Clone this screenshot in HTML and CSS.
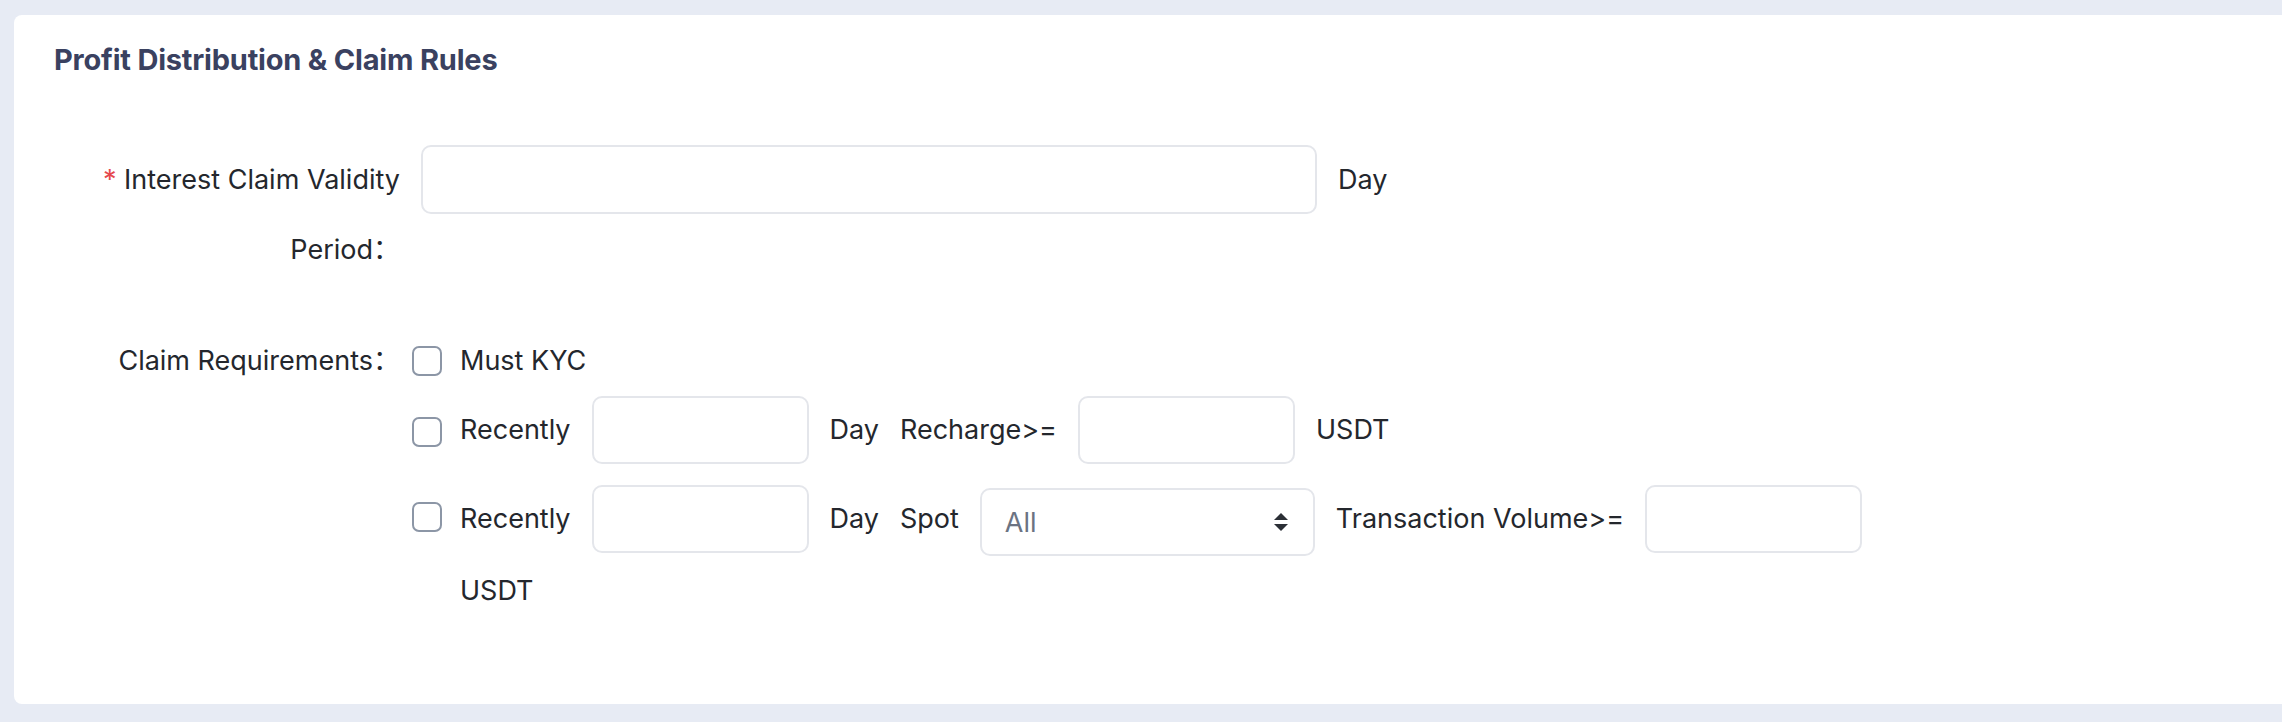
FILE: index.html
```html
<!DOCTYPE html>
<html lang="en">
<head>
<meta charset="utf-8">
<title>Profit Distribution &amp; Claim Rules</title>
<link rel="stylesheet" href="styles.css">
</head>
<body>
<div class="page">
  <section class="card">
    <h2 class="card-title">Profit Distribution &amp; Claim Rules</h2>
    <form class="form">
      <div class="form-item item-validity">
        <label class="form-label"><span class="req">*</span> Interest Claim Validity Period：</label>
        <div class="form-content">
          <input class="input input-lg" type="text">
          <span class="text">Day</span>
        </div>
      </div>
      <div class="form-item">
        <label class="form-label">Claim Requirements：</label>
        <div class="form-content reqs">
          <div class="req-row row-kyc">
            <span class="checkbox"></span>
            <span class="text">Must KYC</span>
          </div>
          <div class="req-row row-recharge">
            <span class="checkbox"></span>
            <div class="req-fields">
              <span class="text">Recently</span>
              <input class="input input-sm" type="text">
              <span class="text">Day</span>
              <span class="text">Recharge&gt;=</span>
              <input class="input input-sm" type="text">
              <span class="text">USDT</span>
            </div>
          </div>
          <div class="req-row row-spot">
            <span class="checkbox"></span>
            <div class="req-fields">
              <span class="text">Recently</span>
              <input class="input input-sm" type="text">
              <span class="text">Day</span>
              <span class="text">Spot</span>
              <div class="select">
                <span class="select-value">All</span>
                <svg class="select-arrows" width="16" height="19" viewBox="0 0 16 19"><path d="M8 0 L15 7 L1 7 Z" fill="#2b2f36"/><path d="M1 11 L15 11 L8 18 Z" fill="#2b2f36"/></svg>
              </div>
              <span class="text">Transaction Volume&gt;=</span>
              <input class="input input-sm" type="text">
              <span class="text">USDT</span>
            </div>
          </div>
        </div>
      </div>
    </form>
  </section>
</div>
</body>
</html>
```

FILE: styles.css
```css
html, body {
  margin: 0;
  padding: 0;
  background: #e7ebf4;
  overflow: hidden;
}
body {
  font-family: Inter, "Noto Sans CJK SC", "Noto Sans", "Liberation Sans", sans-serif;
  color: #24272d;
}
.page {
  padding: 15px 0 0 14px;
  height: 722px;
  box-sizing: border-box;
}
.card {
  background: #ffffff;
  border-radius: 8px 0 0 8px;
  width: calc(100% + 40px);
  height: 689px;
  box-sizing: border-box;
  padding: 25px 40px 0 40px;
}
.card-title {
  margin: 0;
  font-size: 29px;
  line-height: 40px;
  font-weight: 700;
  color: #3a4160;
  letter-spacing: -0.2px;
}
.form {
  margin-top: 65px;
}
.form-item {
  display: flex;
  align-items: flex-start;
  margin-bottom: 41px;
}
.form-label {
  width: 346px;
  flex: none;
  text-align: right;
  font-size: 27px;
  line-height: 70px;
  color: #24272d;
}
.req {
  color: #e5484d;
}
.form-content {
  display: flex;
  align-items: center;
  gap: 21px;
  padding-left: 21px;
  height: 69px;
}
.text {
  font-size: 27px;
  line-height: 40px;
  white-space: nowrap;
}
.input {
  box-sizing: border-box;
  border: 2px solid #e4e6eb;
  border-radius: 10px;
  background: #fff;
  height: 68px;
  font-size: 26px;
  font-family: inherit;
  padding: 0 20px;
  outline: none;
  flex: none;
}
.input-lg {
  width: 896px;
  height: 69px;
}
.input-sm {
  width: 217px;
}
.reqs {
  flex-direction: column;
  align-items: flex-start;
  gap: 0;
  padding-left: 12px;
  height: auto;
}
.req-row {
  display: flex;
  align-items: flex-start;
  gap: 18px;
}
.row-kyc {
  height: 70px;
  align-items: center;
}
.row-recharge .checkbox {
  margin-top: 21px;
}
.row-spot {
  margin-top: 18px;
}
.row-spot .checkbox {
  margin-top: 20px;
}
.checkbox {
  flex: none;
  width: 30px;
  height: 30px;
  box-sizing: border-box;
  border: 2px solid #8c96a6;
  border-radius: 7px;
  background: #fff;
}
.req-fields {
  display: flex;
  flex-wrap: wrap;
  align-items: center;
  column-gap: 21px;
  row-gap: 15px;
  width: 1440px;
}
.req-fields .text {
  line-height: 40px;
}
.select {
  box-sizing: border-box;
  width: 335px;
  height: 68px;
  border: 2px solid #e4e6eb;
  border-radius: 10px;
  display: flex;
  align-items: center;
  justify-content: space-between;
  padding: 0 24px 0 23px;
  margin-top: 6px;
}
.select-value {
  font-size: 27px;
  color: #6b7382;
}
.select-arrows {
  display: block;
}
```
